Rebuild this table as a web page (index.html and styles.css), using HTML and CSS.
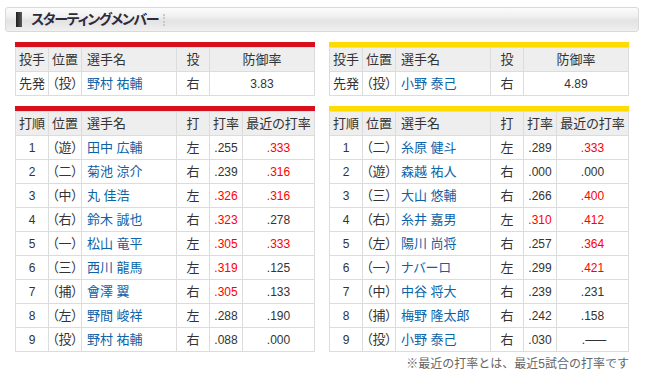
FILE: index.html
```html
<!DOCTYPE html>
<html lang="ja">
<head>
<meta charset="utf-8">
<title>スターティングメンバー</title>
<link rel="stylesheet" href="styles.css">
</head>
<body>
<div class="page">
  <div class="title-bar">
    <span class="title-mark"></span>
    <h2 class="title">スターティングメンバー</h2>
    <span class="title-sep"></span>
  </div>
  <div class="content">
    <div class="teams">
      <div class="team">
        <div class="block block-red">
          <table class="tbl">
            <colgroup><col class="c1"><col class="c2"><col class="c3"><col class="c4"><col class="c56"></colgroup>
            <tr><th>投手</th><th>位置</th><th class="l">選手名</th><th>投</th><th>防御率</th></tr>
            <tr><td>先発</td><td>（投）</td><td class="name">野村 祐輔</td><td>右</td><td class="num">3.83</td></tr>
          </table>
        </div>
        <div class="block block-red">
          <table class="tbl">
            <colgroup><col class="c1"><col class="c2"><col class="c3"><col class="c4"><col class="c5"><col class="c6"></colgroup>
            <tr><th>打順</th><th>位置</th><th class="l">選手名</th><th>打</th><th>打率</th><th>最近の打率</th></tr>
            <tr><td class="num">1</td><td>（遊）</td><td class="name">田中 広輔</td><td>左</td><td class="num">.255</td><td class="num hot">.333</td></tr>
            <tr><td class="num">2</td><td>（二）</td><td class="name">菊池 涼介</td><td>右</td><td class="num">.239</td><td class="num hot">.316</td></tr>
            <tr><td class="num">3</td><td>（中）</td><td class="name">丸 佳浩</td><td>左</td><td class="num hot">.326</td><td class="num hot">.316</td></tr>
            <tr><td class="num">4</td><td>（右）</td><td class="name">鈴木 誠也</td><td>右</td><td class="num hot">.323</td><td class="num">.278</td></tr>
            <tr><td class="num">5</td><td>（一）</td><td class="name">松山 竜平</td><td>左</td><td class="num hot">.305</td><td class="num hot">.333</td></tr>
            <tr><td class="num">6</td><td>（三）</td><td class="name">西川 龍馬</td><td>左</td><td class="num hot">.319</td><td class="num">.125</td></tr>
            <tr><td class="num">7</td><td>（捕）</td><td class="name">會澤 翼</td><td>右</td><td class="num hot">.305</td><td class="num">.133</td></tr>
            <tr><td class="num">8</td><td>（左）</td><td class="name">野間 峻祥</td><td>左</td><td class="num">.288</td><td class="num">.190</td></tr>
            <tr><td class="num">9</td><td>（投）</td><td class="name">野村 祐輔</td><td>右</td><td class="num">.088</td><td class="num">.000</td></tr>
          </table>
        </div>
      </div>
      <div class="team">
        <div class="block block-yellow">
          <table class="tbl">
            <colgroup><col class="c1"><col class="c2"><col class="c3"><col class="c4"><col class="c56"></colgroup>
            <tr><th>投手</th><th>位置</th><th class="l">選手名</th><th>投</th><th>防御率</th></tr>
            <tr><td>先発</td><td>（投）</td><td class="name">小野 泰己</td><td>右</td><td class="num">4.89</td></tr>
          </table>
        </div>
        <div class="block block-yellow">
          <table class="tbl">
            <colgroup><col class="c1"><col class="c2"><col class="c3"><col class="c4"><col class="c5"><col class="c6"></colgroup>
            <tr><th>打順</th><th>位置</th><th class="l">選手名</th><th>打</th><th>打率</th><th>最近の打率</th></tr>
            <tr><td class="num">1</td><td>（二）</td><td class="name">糸原 健斗</td><td>左</td><td class="num">.289</td><td class="num hot">.333</td></tr>
            <tr><td class="num">2</td><td>（遊）</td><td class="name">森越 祐人</td><td>右</td><td class="num">.000</td><td class="num">.000</td></tr>
            <tr><td class="num">3</td><td>（三）</td><td class="name">大山 悠輔</td><td>右</td><td class="num">.266</td><td class="num hot">.400</td></tr>
            <tr><td class="num">4</td><td>（右）</td><td class="name">糸井 嘉男</td><td>左</td><td class="num hot">.310</td><td class="num hot">.412</td></tr>
            <tr><td class="num">5</td><td>（左）</td><td class="name">陽川 尚将</td><td>右</td><td class="num">.257</td><td class="num hot">.364</td></tr>
            <tr><td class="num">6</td><td>（一）</td><td class="name">ナバーロ</td><td>左</td><td class="num">.299</td><td class="num hot">.421</td></tr>
            <tr><td class="num">7</td><td>（中）</td><td class="name">中谷 将大</td><td>右</td><td class="num">.239</td><td class="num">.231</td></tr>
            <tr><td class="num">8</td><td>（捕）</td><td class="name">梅野 隆太郎</td><td>右</td><td class="num">.242</td><td class="num">.158</td></tr>
            <tr><td class="num">9</td><td>（投）</td><td class="name">小野 泰己</td><td>右</td><td class="num">.030</td><td class="num">.<span class="dash">——</span></td></tr>
          </table>
        </div>
      </div>
    </div>
    <p class="note">※最近の打率とは、最近5試合の打率です</p>
  </div>
</div>
</body>
</html>
```

FILE: styles.css
```css
* { box-sizing: border-box; }
html, body { margin: 0; padding: 0; background: #fff; }
body {
  font-family: "Liberation Sans", "Noto Sans CJK JP", sans-serif;
  font-size: 13px;
  color: #333;
}
.page { padding: 7px 0 0 5px; }

.title-bar {
  width: 634px;
  height: 25px;
  border: 1px solid #d9d9d9;
  border-radius: 3px;
  background: linear-gradient(#fbfbfb 0%, #f1f1f1 35%, #e3e3e3 55%, #e9e9e9 80%, #f0f0f0 100%);
  display: flex;
  align-items: center;
  padding-left: 10px;
}
.title-mark {
  width: 6px;
  height: 15px;
  background: linear-gradient(to right, #1e1e1e, #5a5a5a);
}
.title {
  margin: 0 0 0 9px;
  font-size: 14px;
  font-weight: bold;
  letter-spacing: -1.3px;
  color: #2f2a3a;
  font-feature-settings: "palt";
  line-height: 23px;
}
.title-sep {
  margin-left: 5px;
  height: 12px;
  border-left: 2px dotted #c8c8c8;
}

.content { width: 624px; padding-left: 10px; }
.teams { display: flex; gap: 14px; margin-top: 10px; }
.team { width: 300px; display: flex; flex-direction: column; gap: 10px; }

.block { border-top: 5px solid; }
.block-red { border-top-color: #d7101e; }
.block-yellow { border-top-color: #ffdb00; }

.tbl {
  width: 300px;
  border-collapse: collapse;
  table-layout: fixed;
  font-feature-settings: "palt";
}
.c1, .c2, .c4, .c5 { width: 33px; }
.c3 { width: 95px; }
.c6 { width: 72px; }
.c56 { width: 105px; }

.tbl th, .tbl td {
  border: 1px solid #dcdcdc;
  height: 24px;
  padding: 0;
  text-align: center;
  vertical-align: middle;
  font-weight: normal;
  white-space: nowrap;
  line-height: 16px;
}
.tbl th { background: #eeeeee; }
.tbl .l { text-align: left; padding-left: 5px; }
.tbl .name { text-align: left; padding-left: 5px; color: #0b63a8; }
.tbl .num { font-size: 12px; }
.tbl .hot { color: #ff0000; }
.dash { letter-spacing: -3px; }

.note {
  margin: 3px 0 0;
  text-align: right;
  font-size: 12px;
  line-height: 18px;
  color: #666;
}
```
